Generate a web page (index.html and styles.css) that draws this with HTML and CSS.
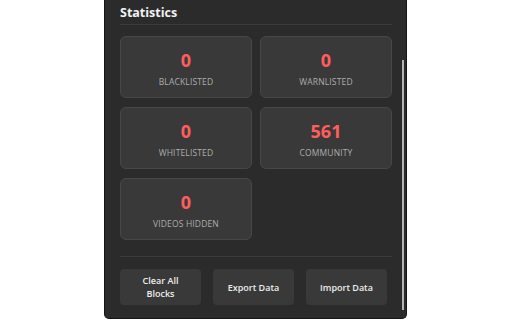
FILE: index.html
```html
<!DOCTYPE html>
<html lang="en">
<head>
  <meta charset="UTF-8" />
  <meta name="viewport" content="width=device-width, initial-scale=1" />
  <title>Statistics</title>
  <link rel="stylesheet" href="styles.css">
</head>
<body>

  <div class="panel">
    <h2 class="title">Statistics</h2>

    <div class="stats">
      <div class="card">
        <div class="num">0</div>
        <div class="label">Blacklisted</div>
      </div>
      <div class="card">
        <div class="num">0</div>
        <div class="label">Warnlisted</div>
      </div>
      <div class="card">
        <div class="num">0</div>
        <div class="label">Whitelisted</div>
      </div>
      <div class="card">
        <div class="num">561</div>
        <div class="label">Community</div>
      </div>
      <div class="card">
        <div class="num">0</div>
        <div class="label">Videos Hidden</div>
      </div>
    </div>

    <div class="actions">
      <button class="btn">Clear All<br>Blocks</button>
      <button class="btn">Export Data</button>
      <button class="btn">Import Data</button>
    </div>

    <div class="scroll-thumb"></div>
  </div>

</body>
</html>
```

FILE: styles.css
```css
body {
  margin: 0;
  background: #fff;
  font-family: "Open Sans", "Noto Sans", sans-serif;
}

.panel {
  position: relative;
  box-sizing: border-box;
  margin-left: 104px;
  width: 303px;
  height: 319px;
  padding: 0 14px 0 15px;
  background: #2b2b2b;
  border: 1px solid #151515;
  border-top: none;
  border-radius: 0 0 5px 5px;
  overflow: hidden;
}

.title {
  margin: 0;
  padding-top: 4px;
  height: 20px;
  line-height: 18px;
  font-size: 12.5px;
  font-weight: 700;
  color: #f2f2f2;
  border-bottom: 1px solid #3b3b3b;
}

.stats {
  display: grid;
  grid-template-columns: 132px 132px;
  gap: 9px 8px;
  margin-top: 11px;
}

.card {
  box-sizing: border-box;
  height: 62px;
  background: #393939;
  border: 1px solid #474747;
  border-radius: 6px;
  display: flex;
  flex-direction: column;
  align-items: center;
  padding-top: 10px;
}

.num {
  font-size: 18px;
  font-weight: 700;
  line-height: 26px;
  color: #ff5e5e;
}

.label {
  margin-top: 4px;
  font-size: 8.5px;
  line-height: 10px;
  text-transform: uppercase;
  letter-spacing: 0.15px;
  color: #adadad;
}

.actions {
  display: flex;
  gap: 12px;
  margin-top: 16px;
  padding-top: 12px;
  border-top: 1px solid #3b3b3b;
}

.btn {
  width: 81px;
  height: 36px;
  padding: 0;
  border: none;
  border-radius: 4px;
  background: #393939;
  color: #eeeeee;
  font-family: inherit;
  font-size: 9px;
  font-weight: 600;
  line-height: 13px;
}

.scroll-thumb {
  position: absolute;
  right: 2px;
  top: 60px;
  width: 2px;
  height: 250px;
  background: #b4b4b4;
}
```
